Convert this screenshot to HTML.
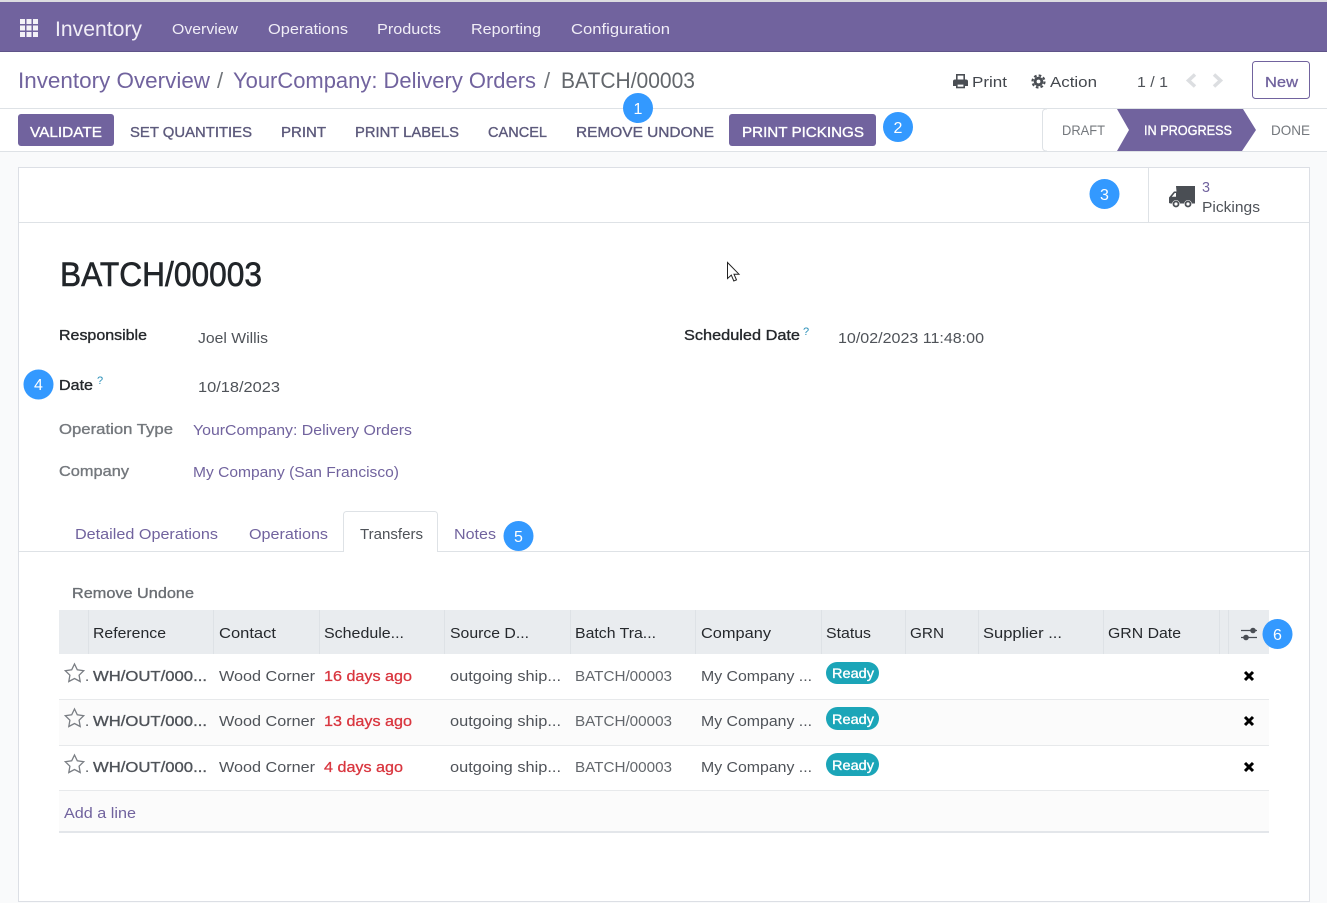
<!DOCTYPE html>
<html><head><meta charset="utf-8"><title>BATCH/00003</title>
<style>
html,body{margin:0;padding:0;background:#f9fafb;width:1327px;height:903px;overflow:hidden}
svg{display:block}
text{font-family:"Liberation Sans",sans-serif;font-size:15px;fill:#4f5359;white-space:pre}
.l{fill:#71639e}
.n{fill:#f1eef7}
.b{font-weight:bold}
.btn{fill:#5d5a7c;stroke:#5d5a7c;stroke-width:.35px}
.w{fill:#fff;stroke:#fff;stroke-width:.35px}
.g{fill:#74787d;stroke:#74787d;stroke-width:.35px}
.lab{fill:#25282c;stroke:#25282c;stroke-width:.35px}
.r{fill:#d9363f;stroke:#d9363f;stroke-width:.3px}
.th{fill:#25282c}
.c{fill:#fff;font-size:16px;text-anchor:middle}
</style></head><body>
<svg width="1327" height="903" viewBox="0 0 1327 903" xmlns="http://www.w3.org/2000/svg">
<rect width="1327" height="903" fill="#f9fafb"/>
<rect width="1327" height="2" fill="#dcdce0"/>
<rect y="2" width="1327" height="49" fill="#71639e"/>
<rect y="51" width="1327" height="1" fill="#5f5488"/>
<rect y="52" width="1327" height="100" fill="#fff"/>
<rect y="108" width="1327" height="1" fill="#dee2e6"/>
<rect y="151" width="1327" height="1" fill="#dee2e6"/>

<!-- nav -->
<g fill="#f3f1f7">
<rect x="20" y="19" width="5" height="5"/><rect x="26.500" y="19" width="5" height="5"/><rect x="33" y="19" width="5" height="5"/>
<rect x="20" y="25.500" width="5" height="5"/><rect x="26.500" y="25.500" width="5" height="5"/><rect x="33" y="25.500" width="5" height="5"/>
<rect x="20" y="32" width="5" height="5"/><rect x="26.500" y="32" width="5" height="5"/><rect x="33" y="32" width="5" height="5"/>
</g>
<text class="n" x="55" y="36" style="font-size:21px" textLength="87" lengthAdjust="spacingAndGlyphs">Inventory</text>
<text class="n" x="172" y="34" textLength="66" lengthAdjust="spacingAndGlyphs">Overview</text>
<text class="n" x="268" y="34" textLength="80" lengthAdjust="spacingAndGlyphs">Operations</text>
<text class="n" x="377" y="34" textLength="64" lengthAdjust="spacingAndGlyphs">Products</text>
<text class="n" x="471" y="34" textLength="70" lengthAdjust="spacingAndGlyphs">Reporting</text>
<text class="n" x="571" y="34" textLength="99" lengthAdjust="spacingAndGlyphs">Configuration</text>

<!-- breadcrumb -->
<text class="l" style="font-size:22px" x="18" y="88" textLength="192" lengthAdjust="spacingAndGlyphs">Inventory Overview</text>
<text style="font-size:22px;fill:#71757a" x="217" y="88">/</text>
<text class="l" style="font-size:22px" x="233" y="88" textLength="303" lengthAdjust="spacingAndGlyphs">YourCompany: Delivery Orders</text>
<text style="font-size:22px;fill:#71757a" x="544" y="88">/</text>
<text style="font-size:22px;fill:#63676c" x="561" y="88" textLength="134" lengthAdjust="spacingAndGlyphs">BATCH/00003</text>

<!-- top right -->
<rect x="956.800" y="74.800" width="7.400" height="6" fill="#fff" stroke="#4a4e54" stroke-width="1.600"/>
<path d="M955 79.500h11a2 2 0 0 1 2 2v4.500h-15v-4.500a2 2 0 0 1 2-2z" fill="#4a4e54"/>
<rect x="956.800" y="83.800" width="7.400" height="3.700" fill="#fff" stroke="#4a4e54" stroke-width="1.600"/>
<text x="972" y="87" textLength="35" lengthAdjust="spacingAndGlyphs" style="fill:#43474d">Print</text>
<circle cx="1038.500" cy="81.500" r="4.800" fill="#4a4e54"/>
<circle cx="1038.500" cy="81.500" r="6" fill="none" stroke="#4a4e54" stroke-width="2.200" stroke-dasharray="2.600 2.110"/>
<circle cx="1038.500" cy="81.500" r="1.900" fill="#fff"/>
<text x="1050" y="87" textLength="47" lengthAdjust="spacingAndGlyphs" style="fill:#43474d">Action</text>
<text x="1137" y="87" textLength="31" lengthAdjust="spacingAndGlyphs">1 / 1</text>
<path d="M1195 74.500l-6.500 6 6.500 6M1214 74.500l6.500 6-6.500 6" fill="none" stroke="#dcdee1" stroke-width="3.500"/>
<rect x="1252.500" y="61.500" width="57" height="37" rx="3" fill="#fff" stroke="#71639e"/>
<text class="l" x="1265" y="87" textLength="33" lengthAdjust="spacingAndGlyphs" style="stroke:#71639e;stroke-width:.3px">New</text>

<!-- action bar -->
<rect x="18" y="114" width="96" height="32" rx="3" fill="#71639e"/>
<text class="w" x="30" y="137" textLength="72" lengthAdjust="spacingAndGlyphs">VALIDATE</text>
<text class="btn" x="130" y="137" textLength="122" lengthAdjust="spacingAndGlyphs">SET QUANTITIES</text>
<text class="btn" x="281" y="137" textLength="45" lengthAdjust="spacingAndGlyphs">PRINT</text>
<text class="btn" x="355" y="137" textLength="104" lengthAdjust="spacingAndGlyphs">PRINT LABELS</text>
<text class="btn" x="488" y="137" textLength="59" lengthAdjust="spacingAndGlyphs">CANCEL</text>
<text class="btn" x="576" y="137" textLength="138" lengthAdjust="spacingAndGlyphs">REMOVE UNDONE</text>
<rect x="729" y="114" width="147" height="32" rx="3" fill="#71639e"/>
<text class="w" x="742" y="137" textLength="122" lengthAdjust="spacingAndGlyphs">PRINT PICKINGS</text>

<!-- statusbar -->
<path d="M1047 109h-1a3.500 3.500 0 0 0-3.500 3.500v35a3.500 3.500 0 0 0 3.500 3.500h1" fill="none" stroke="#dee2e6"/>
<text x="1062" y="135" textLength="43" lengthAdjust="spacingAndGlyphs" style="font-size:14px;fill:#74787d">DRAFT</text>
<path d="M1117 109H1243L1256 130 1242 151H1117L1129 130Z" fill="#71639e"/>
<text class="w" x="1144" y="135" textLength="88" lengthAdjust="spacingAndGlyphs" style="font-size:14px">IN PROGRESS</text>
<text x="1271" y="135" textLength="39" lengthAdjust="spacingAndGlyphs" style="font-size:14px;fill:#74787d">DONE</text>

<!-- sheet -->
<rect x="18.500" y="167.500" width="1291" height="734" fill="#fff" stroke="#dcdfe5"/>
<rect x="19" y="222" width="1290" height="1" fill="#dee2e6"/>
<rect x="1148" y="168" width="1" height="54" fill="#dee2e6"/>

<!-- truck -->
<path d="M1176 186h19v17.500h-24.500l-1.500-.5v-5.500l5-6h2.500zM1171.800 196.800h4.200v-3.800h-1.200z" fill="#4a4e54" fill-rule="evenodd"/>
<circle cx="1176" cy="204" r="3.900" fill="#fff"/><circle cx="1188" cy="204" r="3.900" fill="#fff"/>
<circle cx="1176" cy="204" r="2.500" fill="#fff" stroke="#4a4e54" stroke-width="1.800"/>
<circle cx="1188" cy="204" r="2.500" fill="#fff" stroke="#4a4e54" stroke-width="1.800"/>
<text class="l" x="1202" y="192" textLength="8" lengthAdjust="spacingAndGlyphs">3</text>
<text x="1202" y="212" textLength="58" lengthAdjust="spacingAndGlyphs">Pickings</text>

<!-- title -->
<text x="60" y="286" textLength="202" lengthAdjust="spacingAndGlyphs" style="font-size:34px;fill:#212529;stroke:#212529;stroke-width:.6px">BATCH/00003</text>

<!-- fields -->
<text class="lab" x="59" y="340" textLength="88" lengthAdjust="spacingAndGlyphs">Responsible</text>
<text x="198" y="343" textLength="70" lengthAdjust="spacingAndGlyphs">Joel Willis</text>
<text class="lab" x="684" y="340" textLength="116" lengthAdjust="spacingAndGlyphs">Scheduled Date</text>
<text x="803" y="335" style="font-size:11px;fill:#2a8fb8">?</text>
<text x="838" y="343" textLength="146" lengthAdjust="spacingAndGlyphs">10/02/2023 11:48:00</text>
<text class="lab" x="59" y="390" textLength="34" lengthAdjust="spacingAndGlyphs">Date</text>
<text x="97" y="384" style="font-size:11px;fill:#2a8fb8">?</text>
<text x="198" y="392" textLength="82" lengthAdjust="spacingAndGlyphs">10/18/2023</text>
<text class="g" x="59" y="434" textLength="114" lengthAdjust="spacingAndGlyphs">Operation Type</text>
<text class="l" x="193" y="435" textLength="219" lengthAdjust="spacingAndGlyphs">YourCompany: Delivery Orders</text>
<text class="g" x="59" y="476" textLength="70" lengthAdjust="spacingAndGlyphs">Company</text>
<text class="l" x="193" y="477" textLength="206" lengthAdjust="spacingAndGlyphs">My Company (San Francisco)</text>

<!-- tabs -->
<rect x="19" y="551" width="1290" height="1" fill="#dee2e6"/>
<path d="M343.500 552V514.500a3 3 0 0 1 3-3h88a3 3 0 0 1 3 3v37.500" fill="#fff" stroke="#dee2e6"/>
<rect x="344" y="551" width="93" height="1" fill="#fff"/>
<text class="l" x="75" y="539" textLength="143" lengthAdjust="spacingAndGlyphs">Detailed Operations</text>
<text class="l" x="249" y="539" textLength="79" lengthAdjust="spacingAndGlyphs">Operations</text>
<text x="360" y="539" textLength="63" lengthAdjust="spacingAndGlyphs">Transfers</text>
<text class="l" x="454" y="539" textLength="42" lengthAdjust="spacingAndGlyphs">Notes</text>

<text class="g" x="72" y="598" textLength="122" lengthAdjust="spacingAndGlyphs" style="fill:#6b6f74;stroke:#6b6f74">Remove Undone</text>

<!-- table -->
<rect x="59" y="610" width="1210" height="44" fill="#e9ecef"/>
<g fill="#dee2e6">
<rect x="88" y="610" width="1" height="44"/><rect x="213" y="610" width="1" height="44"/><rect x="319" y="610" width="1" height="44"/><rect x="444" y="610" width="1" height="44"/><rect x="570" y="610" width="1" height="44"/><rect x="695" y="610" width="1" height="44"/><rect x="821" y="610" width="1" height="44"/><rect x="905" y="610" width="1" height="44"/><rect x="978" y="610" width="1" height="44"/><rect x="1103" y="610" width="1" height="44"/><rect x="1219" y="610" width="1" height="44"/><rect x="1228" y="610" width="1" height="44"/>
</g>
<text class="th" x="93" y="638" textLength="73" lengthAdjust="spacingAndGlyphs">Reference</text>
<text class="th" x="219" y="638" textLength="57" lengthAdjust="spacingAndGlyphs">Contact</text>
<text class="th" x="324" y="638" textLength="80" lengthAdjust="spacingAndGlyphs">Schedule...</text>
<text class="th" x="450" y="638" textLength="79" lengthAdjust="spacingAndGlyphs">Source D...</text>
<text class="th" x="575" y="638" textLength="81" lengthAdjust="spacingAndGlyphs">Batch Tra...</text>
<text class="th" x="701" y="638" textLength="70" lengthAdjust="spacingAndGlyphs">Company</text>
<text class="th" x="826" y="638" textLength="45" lengthAdjust="spacingAndGlyphs">Status</text>
<text class="th" x="910" y="638" textLength="34" lengthAdjust="spacingAndGlyphs">GRN</text>
<text class="th" x="983" y="638" textLength="79" lengthAdjust="spacingAndGlyphs">Supplier ...</text>
<text class="th" x="1108" y="638" textLength="73" lengthAdjust="spacingAndGlyphs">GRN Date</text>
<path d="M1241 630.500h16M1241 637.500h16" stroke="#4a4e54" stroke-width="1.300"/>
<circle cx="1253" cy="630.500" r="2.800" fill="#4a4e54"/><circle cx="1246" cy="637.500" r="2.800" fill="#4a4e54"/>

<rect x="59" y="700" width="1210" height="45" fill="#fbfbfb"/>
<rect x="59" y="791" width="1210" height="40" fill="#fbfbfb"/>
<rect x="59" y="699" width="1210" height="1" fill="#e7e9eb"/>
<rect x="59" y="745" width="1210" height="1" fill="#e7e9eb"/>
<rect x="59" y="790" width="1210" height="1" fill="#e7e9eb"/>
<rect x="59" y="831" width="1210" height="2" fill="#e3e6ea"/>

<!-- rows -->
<g fill="none" stroke="#7a7e84" stroke-width="1.300">
<path d="M74.500 664l2.800 5.800 6.400.9-4.600 4.500 1.100 6.300-5.700-3-5.700 3 1.100-6.300-4.600-4.500 6.400-.9z"/>
<path transform="translate(0 45)" d="M74.500 664l2.800 5.800 6.400.9-4.600 4.500 1.100 6.300-5.700-3-5.700 3 1.100-6.300-4.600-4.500 6.400-.9z"/>
<path transform="translate(0 91)" d="M74.500 664l2.800 5.800 6.400.9-4.600 4.500 1.100 6.300-5.700-3-5.700 3 1.100-6.300-4.600-4.500 6.400-.9z"/>
</g>

<text x="85" y="681">.</text>
<text x="93" y="681" textLength="114" lengthAdjust="spacingAndGlyphs" style="stroke:#4f5359;stroke-width:.35px">WH/OUT/000...</text>
<text x="219" y="681" textLength="96" lengthAdjust="spacingAndGlyphs">Wood Corner</text>
<text class="r" x="324" y="681" textLength="88" lengthAdjust="spacingAndGlyphs">16 days ago</text>
<text x="450" y="681" textLength="111" lengthAdjust="spacingAndGlyphs">outgoing ship...</text>
<text x="575" y="681" textLength="97" lengthAdjust="spacingAndGlyphs" style="fill:#63676c">BATCH/00003</text>
<text x="701" y="681" textLength="111" lengthAdjust="spacingAndGlyphs">My Company ...</text>
<rect x="826" y="662" width="53" height="22" rx="11" fill="#1ba5b8"/>
<text class="w" x="832" y="678" textLength="42" lengthAdjust="spacingAndGlyphs" style="font-size:14px">Ready</text>
<path d="M1245 672l8 8M1253 672l-8 8" stroke="#000" stroke-width="3"/>

<text x="85" y="726">.</text>
<text x="93" y="726" textLength="114" lengthAdjust="spacingAndGlyphs" style="stroke:#4f5359;stroke-width:.35px">WH/OUT/000...</text>
<text x="219" y="726" textLength="96" lengthAdjust="spacingAndGlyphs">Wood Corner</text>
<text class="r" x="324" y="726" textLength="88" lengthAdjust="spacingAndGlyphs">13 days ago</text>
<text x="450" y="726" textLength="111" lengthAdjust="spacingAndGlyphs">outgoing ship...</text>
<text x="575" y="726" textLength="97" lengthAdjust="spacingAndGlyphs" style="fill:#63676c">BATCH/00003</text>
<text x="701" y="726" textLength="111" lengthAdjust="spacingAndGlyphs">My Company ...</text>
<rect x="826" y="707" width="53" height="23" rx="11.500" fill="#1ba5b8"/>
<text class="w" x="832" y="724" textLength="42" lengthAdjust="spacingAndGlyphs" style="font-size:14px">Ready</text>
<path d="M1245 717l8 8M1253 717l-8 8" stroke="#000" stroke-width="3"/>

<text x="85" y="772">.</text>
<text x="93" y="772" textLength="114" lengthAdjust="spacingAndGlyphs" style="stroke:#4f5359;stroke-width:.35px">WH/OUT/000...</text>
<text x="219" y="772" textLength="96" lengthAdjust="spacingAndGlyphs">Wood Corner</text>
<text class="r" x="324" y="772" textLength="79" lengthAdjust="spacingAndGlyphs">4 days ago</text>
<text x="450" y="772" textLength="111" lengthAdjust="spacingAndGlyphs">outgoing ship...</text>
<text x="575" y="772" textLength="97" lengthAdjust="spacingAndGlyphs" style="fill:#63676c">BATCH/00003</text>
<text x="701" y="772" textLength="111" lengthAdjust="spacingAndGlyphs">My Company ...</text>
<rect x="826" y="753" width="53" height="23" rx="11.500" fill="#1ba5b8"/>
<text class="w" x="832" y="770" textLength="42" lengthAdjust="spacingAndGlyphs" style="font-size:14px">Ready</text>
<path d="M1245 763l8 8M1253 763l-8 8" stroke="#000" stroke-width="3"/>

<text class="l" x="64" y="818" textLength="72" lengthAdjust="spacingAndGlyphs">Add a line</text>

<!-- cursor -->
<path d="M727.500 262.500v16l3.800-3.400 2.500 5.900 2.700-1.100-2.500-5.700h5z" fill="#fff" stroke="#222" stroke-width="1"/>

<!-- callouts -->
<g fill="#3399ff">
<circle cx="638" cy="108" r="15"/><circle cx="898" cy="127" r="15"/><circle cx="1104.500" cy="194" r="15"/><circle cx="38.500" cy="384.500" r="15"/><circle cx="518.500" cy="536" r="15"/><circle cx="1277.500" cy="634" r="15"/>
</g>
<text class="c" x="638" y="114">1</text>
<text class="c" x="898" y="133">2</text>
<text class="c" x="1104.500" y="200">3</text>
<text class="c" x="38.500" y="390">4</text>
<text class="c" x="518.500" y="542">5</text>
<text class="c" x="1277.500" y="640">6</text>
</svg>
</body></html>
